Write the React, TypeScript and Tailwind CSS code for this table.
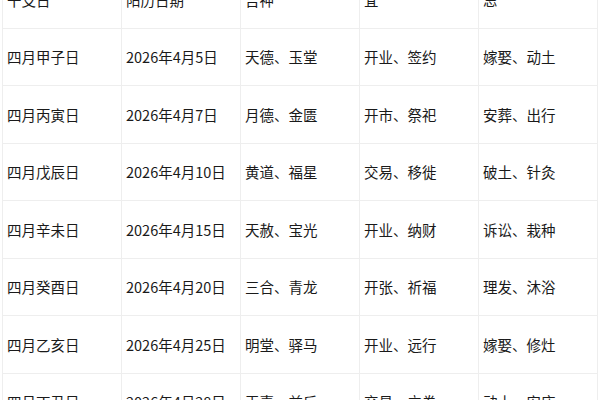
import React from "react";

const header = ["干支日", "阳历日期", "吉神", "宜", "忌"];
const rows = [
  ["四月甲子日", "2026年4月5日", "天德、玉堂", "开业、签约", "嫁娶、动土"],
  ["四月丙寅日", "2026年4月7日", "月德、金匮", "开市、祭祀", "安葬、出行"],
  ["四月戊辰日", "2026年4月10日", "黄道、福星", "交易、移徙", "破土、针灸"],
  ["四月辛未日", "2026年4月15日", "天赦、宝光", "开业、纳财", "诉讼、栽种"],
  ["四月癸酉日", "2026年4月20日", "三合、青龙", "开张、祈福", "理发、沐浴"],
  ["四月乙亥日", "2026年4月25日", "明堂、驿马", "开业、远行", "嫁娶、修灶"],
  ["四月丁丑日", "2026年4月28日", "天喜、益后", "交易、立券", "动土、安床"],
];

export default function App() {
  return (
    <div className="w-[600px] h-[400px] overflow-hidden bg-white">
      <table
        className="ml-[2px] -mt-[30px] border-collapse text-[14.5px] text-[#1a1a1a]"
        style={{ fontFamily: '"Noto Sans CJK SC", "Noto Sans", sans-serif' }}
      >
        <tbody>
          {[header, ...rows].map((r, i) => (
            <tr key={i} className="h-[57.5px]">
              {r.map((c, j) => (
                <td
                  key={j}
                  className="w-[119px] min-w-[119px] max-w-[119px] border border-[#eeeeee] pl-[4px] pt-[1px] align-middle whitespace-nowrap leading-none"
                >
                  {c}
                </td>
              ))}
            </tr>
          ))}
        </tbody>
      </table>
    </div>
  );
}
